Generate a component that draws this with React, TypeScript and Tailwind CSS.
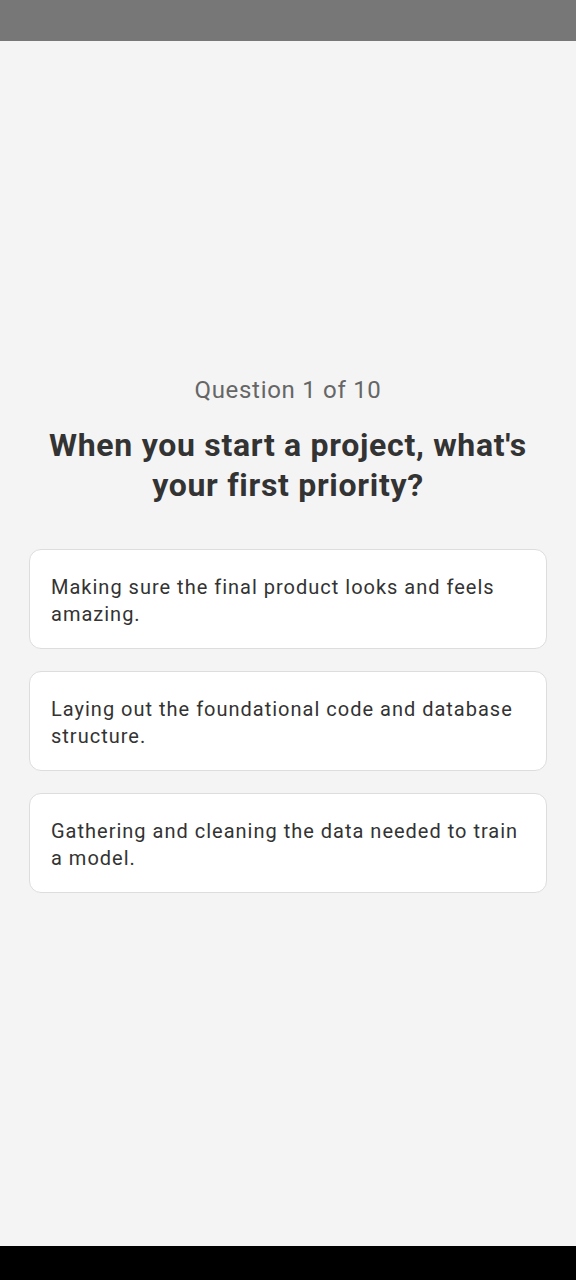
import React from "react";

const options = [
  "Making sure the final product looks and feels amazing.",
  "Laying out the foundational code and database structure.",
  "Gathering and cleaning the data needed to train a model.",
];

export default function App() {
  return (
    <div
      className="flex h-[1280px] w-full flex-col bg-[#f4f4f4]"
      style={{ fontFamily: "Roboto, 'Noto Sans', sans-serif" }}
    >
      <div className="h-[41px] shrink-0 bg-[#777777]" />
      <main className="flex flex-1 flex-col justify-center px-[29px] pb-[19px]">
        <p className="text-center text-[24px] leading-[28px] tracking-[0.7px] text-[#666666]">Question 1 of 10</p>
        <h1 className="mt-[21px] text-center text-[32px] font-bold leading-[40px] tracking-[0.7px] text-[#333333]">
          When you start a project, what's your first priority?
        </h1>
        <div className="mt-[44px] flex flex-col gap-[22px]">
          {options.map((o) => (
            <button
              key={o}
              className="h-[100px] rounded-[12px] border border-[#dddddd] bg-white px-[21px] pt-[4px] text-left text-[20px] leading-[27px] tracking-[1px] text-[#333333]"
            >
              {o}
            </button>
          ))}
        </div>
      </main>
      <div className="h-[34px] shrink-0 bg-black" />
    </div>
  );
}
